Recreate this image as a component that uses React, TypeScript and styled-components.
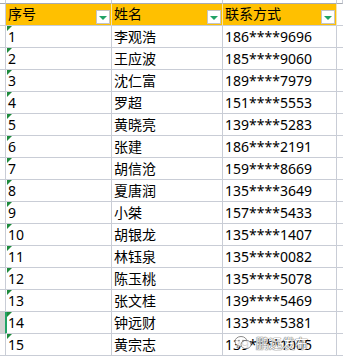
import styled, { createGlobalStyle } from "styled-components";

const GlobalStyle = createGlobalStyle`
  html, body {
    margin: 0;
    padding: 0;
    background: #ffffff;
  }
  body {
    font-family: "Noto Sans", "Noto Sans CJK SC", sans-serif;
    font-size: 14px;
    color: #000000;
  }
`;

const GRID = "#c9cdd6";

const Page = styled.div`
  position: relative;
  width: 343px;
  height: 357px;
  overflow: hidden;
`;

const Sheet = styled.div`
  display: grid;
  grid-template-columns: 6px 106px 111px 114px 1fr;
  grid-auto-rows: 22px;
  grid-template-rows: 4px;
`;

const TopStrip = styled.div`
  height: 4px;
  box-sizing: border-box;
  background: #ffffff;
  border-bottom: 1px solid #a7abb3;
  border-right: 1px solid ${GRID};
`;

const RowHead = styled.div<{ $active?: boolean }>`
  box-sizing: border-box;
  background: ${(p) => (p.$active ? "#d3d3d3" : "#ffffff")};
  border-bottom: 1px solid ${GRID};
  border-right: 1px solid ${(p) => (p.$active ? "#21a366" : GRID)};
`;

const HeadCell = styled.div`
  box-sizing: border-box;
  background: #ffc000;
  border-bottom: 1px solid ${GRID};
  border-right: 1px solid #f3e2b0;
  display: flex;
  align-items: flex-end;
  justify-content: space-between;
  padding: 0 1px 1px 2px;
  line-height: 21px;
  white-space: nowrap;
`;

const HeadText = styled.span`
  align-self: stretch;
  line-height: 20px;
`;

const FilterButton = styled.span`
  box-sizing: border-box;
  width: 14px;
  height: 14px;
  background: #ffffff;
  border: 1px solid #c4c4c4;
  display: flex;
  align-items: center;
  justify-content: center;
  &::after {
    content: "";
    width: 0;
    height: 0;
    border-left: 4px solid transparent;
    border-right: 4px solid transparent;
    border-top: 4px solid #21a366;
    margin-top: 1px;
  }
`;

const Cell = styled.div<{ $flag?: boolean; $active?: boolean }>`
  position: relative;
  box-sizing: border-box;
  border-bottom: 1px solid ${GRID};
  border-right: 1px solid ${GRID};
  padding-left: 2px;
  line-height: 21px;
  white-space: nowrap;
  box-shadow: ${(p) => (p.$active ? "inset 1px 0 0 #21a366" : "none")};
  &::before {
    content: "";
    display: ${(p) => (p.$flag ? "block" : "none")};
    position: absolute;
    top: 0;
    left: 1px;
    width: 0;
    height: 0;
    border-top: 5px solid #1e8a3c;
    border-right: 5px solid transparent;
  }
`;

const Filler = styled.div`
  box-sizing: border-box;
  border-bottom: 1px solid ${GRID};
`;

const Watermark = styled.div`
  position: absolute;
  left: 234px;
  top: 334px;
  display: flex;
  align-items: center;
  gap: 4px;
  opacity: 0.85;
`;

const MarkText = styled.span`
  font-family: "Noto Sans CJK SC", sans-serif;
  font-size: 13px;
  line-height: 18px;
  color: #ffffff;
  text-shadow: 0 0 1px #555, 0 0 1px #555, 0 0 1px #555;
`;

const rows = [
  ["1", "李观浩", "186****9696"],
  ["2", "王应波", "185****9060"],
  ["3", "沈仁富", "189****7979"],
  ["4", "罗超", "151****5553"],
  ["5", "黄晓亮", "139****5283"],
  ["6", "张建", "186****2191"],
  ["7", "胡信沧", "159****8669"],
  ["8", "夏唐润", "135****3649"],
  ["9", "小桀", "157****5433"],
  ["10", "胡银龙", "135****1407"],
  ["11", "林钰泉", "135****0082"],
  ["12", "陈玉桃", "135****5078"],
  ["13", "张文桂", "139****5469"],
  ["14", "钟远财", "133****5381"],
  ["15", "黄宗志", "139****1005"],
];

const headers = ["序号", "姓名", "联系方式"];

export default function App() {
  return (
    <Page>
      <GlobalStyle />
      <Sheet>
        <TopStrip />
        <TopStrip />
        <TopStrip />
        <TopStrip />
        <TopStrip />

        <RowHead />
        {headers.map((h) => (
          <HeadCell key={h}>
            <HeadText>{h}</HeadText>
            <FilterButton />
          </HeadCell>
        ))}
        <Filler />

        {rows.map(([no, name, phone]) => {
          const active = no === "14";
          return [
            <RowHead key={no + "h"} $active={active} />,
            <Cell key={no + "a"} $flag $active={active}>
              {no}
            </Cell>,
            <Cell key={no + "b"}>{name}</Cell>,
            <Cell key={no + "c"}>{phone}</Cell>,
            <Filler key={no + "d"} />,
          ];
        })}
      </Sheet>
      <Watermark>
        <svg width="18" height="16" viewBox="0 0 18 16" fill="none">
          <ellipse cx="7" cy="6.5" rx="6" ry="5" stroke="#777" strokeWidth="1" fill="#fff" />
          <path d="M3.5 10.5 L3 13 L6 11.3" stroke="#777" strokeWidth="1" fill="#fff" />
          <ellipse cx="12" cy="9.5" rx="5" ry="4.2" stroke="#777" strokeWidth="1" fill="#fff" />
          <circle cx="5" cy="5.5" r="0.8" fill="#777" />
          <circle cx="9" cy="5.5" r="0.8" fill="#777" />
        </svg>
        <MarkText>鹏远发布</MarkText>
      </Watermark>
    </Page>
  );
}
